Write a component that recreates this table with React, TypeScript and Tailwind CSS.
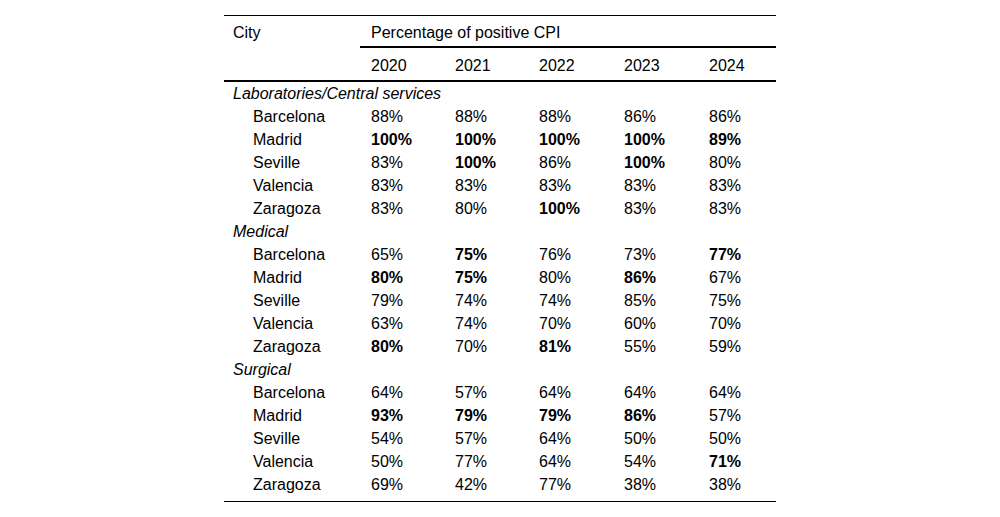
type Cell = [number, boolean?];

const years = ["2020", "2021", "2022", "2023", "2024"];

const sections: { title: string; rows: { city: string; values: Cell[] }[] }[] = [
  {
    title: "Laboratories/Central services",
    rows: [
      { city: "Barcelona", values: [[88], [88], [88], [86], [86]] },
      { city: "Madrid", values: [[100, true], [100, true], [100, true], [100, true], [89, true]] },
      { city: "Seville", values: [[83], [100, true], [86], [100, true], [80]] },
      { city: "Valencia", values: [[83], [83], [83], [83], [83]] },
      { city: "Zaragoza", values: [[83], [80], [100, true], [83], [83]] },
    ],
  },
  {
    title: "Medical",
    rows: [
      { city: "Barcelona", values: [[65], [75, true], [76], [73], [77, true]] },
      { city: "Madrid", values: [[80, true], [75, true], [80], [86, true], [67]] },
      { city: "Seville", values: [[79], [74], [74], [85], [75]] },
      { city: "Valencia", values: [[63], [74], [70], [60], [70]] },
      { city: "Zaragoza", values: [[80, true], [70], [81, true], [55], [59]] },
    ],
  },
  {
    title: "Surgical",
    rows: [
      { city: "Barcelona", values: [[64], [57], [64], [64], [64]] },
      { city: "Madrid", values: [[93, true], [79, true], [79, true], [86, true], [57]] },
      { city: "Seville", values: [[54], [57], [64], [50], [50]] },
      { city: "Valencia", values: [[50], [77], [64], [54], [71, true]] },
      { city: "Zaragoza", values: [[69], [42], [77], [38], [38]] },
    ],
  },
];

const cols = "grid grid-cols-[136px_85px_84px_85px_85px_77px]";

export default function App() {
  return (
    <div className="w-[1000px] h-[517px] bg-white text-black font-['Liberation_Sans',Arial,sans-serif] text-[16px] leading-[23px]">
      <div className="w-[552px] mx-auto pt-[15px]">
        <div className="border-t border-black">
          {/* header */}
          <div className={`${cols} border-b-2 border-black`}>
            <div className="row-span-2 pl-[9px] pt-[5px]">City</div>
            <div className="col-span-5 h-[32px] pl-[11px] pt-[5px] border-b-2 border-black">
              Percentage of positive CPI
            </div>
            {years.map((y, i) => (
              <div key={y} className={`h-[32px] pt-[6px] ${i === 0 ? "pl-[11px]" : "pl-[10px]"}`}>
                {y}
              </div>
            ))}
          </div>

          {/* body */}
          <div className="pb-[5px] border-b border-black">
            {sections.map((s) => (
              <div key={s.title}>
                <div className="h-[23px] pl-[9px] italic">{s.title}</div>
                {s.rows.map((r) => (
                  <div key={s.title + r.city} className={`${cols} h-[23px]`}>
                    <div className="pl-[29px]">{r.city}</div>
                    {r.values.map(([v, b], i) => (
                      <div
                        key={i}
                        className={`${i === 0 ? "pl-[11px]" : "pl-[10px]"} ${b ? "font-bold" : ""}`}
                      >
                        {v}%
                      </div>
                    ))}
                  </div>
                ))}
              </div>
            ))}
          </div>
        </div>
      </div>
    </div>
  );
}
